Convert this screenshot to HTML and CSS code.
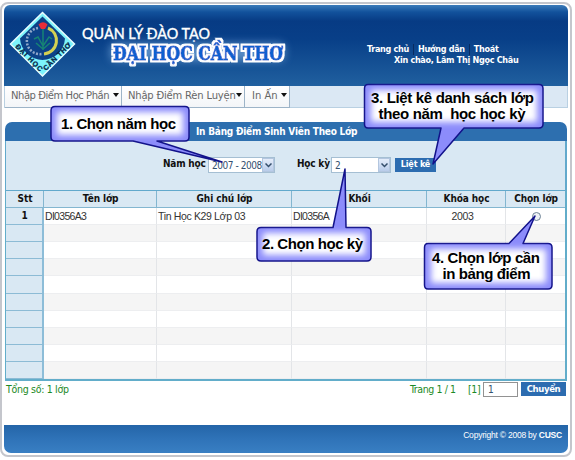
FILE: index.html
```html
<!DOCTYPE html>
<html lang="vi">
<head>
<meta charset="utf-8">
<title>Quản lý đào tạo</title>
<link rel="stylesheet" href="styles.css">
</head>
<body>
<div class="frame">
  <header class="header">
    <svg class="brand" width="310" height="81" viewBox="4 5 310 81">
      <defs>
        <filter id="halo" x="-20%" y="-60%" width="140%" height="220%"><feGaussianBlur stdDeviation="4"/></filter>
        <filter id="outline" x="-5%" y="-30%" width="110%" height="160%">
          <feMorphology in="SourceAlpha" operator="dilate" radius="2" result="fat"/>
          <feGaussianBlur in="fat" stdDeviation=".4" result="edge"/>
          <feFlood flood-color="#fff"/>
          <feComposite in2="edge" operator="in" result="white"/>
          <feMerge><feMergeNode in="white"/><feMergeNode in="SourceGraphic"/></feMerge>
        </filter>
        <path id="left-edge" d="M15 47 L41 73"/>
        <path id="right-edge" d="M46 71 L73 44"/>
      </defs>
      <path d="M42.500 12.500 L74.500 44 L42.500 76 L10.500 44Z" fill="#7df4fb" stroke="#e8fdff" stroke-width="1.500"/>
      <path d="M42.500 16.500 L65 38.500 A23 23 0 0 1 42.500 60 A23 23 0 0 1 20 38.500Z" fill="#0c4288"/>
      <path d="M38 28 A13 13 0 0 0 42 54" fill="none" stroke="#91a8ca" stroke-width="2.500" stroke-dasharray="2 1.500"/>
      <path d="M48 28 A13.500 13.500 0 0 1 44 54" fill="none" stroke="#d3d052" stroke-width="3"/>
      <path d="M43 29V50M34 39L38 37L43 46L49 37L52 39M36 43L43 49L50 43" fill="none" stroke="#168474" stroke-width="1.500"/>
      <path d="M38.500 24.500Q43 20 47.500 24.500L45 29H41Z" fill="#e82d38"/>
      <text class="seal"><textPath href="#left-edge" textLength="35">ĐẠI HỌC</textPath></text>
      <text class="seal"><textPath href="#right-edge" textLength="36">CẦN THƠ</textPath></text>
      <text class="brand-top" x="82" y="39" textLength="128" lengthAdjust="spacingAndGlyphs">QUẢN LÝ ĐÀO TẠO</text>
      <rect x="110" y="43" width="175" height="18" rx="6" fill="#6fa2d8" opacity=".75" filter="url(#halo)"/>
      <text class="brand-main" x="113" y="60" textLength="170" lengthAdjust="spacingAndGlyphs" filter="url(#outline)">ĐẠI HỌC CẦN THƠ</text>
    </svg>
    <div class="account">
      <div class="links"><span>Trang chủ</span><i></i><span>Hướng dẫn</span><i></i><span>Thoát</span></div>
      <div class="hello">Xin chào, Lâm Thị Ngọc Châu</div>
    </div>
  </header>

  <nav class="menu">
    <div class="item item-a">Nhập Điểm Học Phần<b></b></div>
    <div class="item item-b">Nhập Điểm Rèn Luyện<b></b></div>
    <div class="item item-c">In Ấn<b></b></div>
  </nav>

  <main class="panel">
    <h1>In Bảng Điểm Sinh Viên Theo Lớp</h1>
    <div class="filters">
      <label class="label-year">Năm học</label>
      <div class="select year"><span>2007 - 2008</span><em><svg width="7" height="5"><path d="M.5 .5L3.500 3.500L6.500 .5"/></svg></em></div>
      <label class="label-term">Học kỳ</label>
      <div class="select term"><span>2</span><em><svg width="7" height="5"><path d="M.5 .5L3.500 3.500L6.500 .5"/></svg></em></div>
      <div class="button list">Liệt kê</div>
    </div>
    <div class="grid">
      <div class="row head"><div>Stt</div><div>Tên lớp</div><div>Ghi chú lớp</div><div>Khối</div><div>Khóa học</div><div>Chọn lớp</div></div>
      <div class="row"><div>1</div><div class="code">DI0356A3</div><div>Tin Học K29 Lớp 03</div><div class="code">DI0356A</div><div class="mid">2003</div><div class="mid"><span class="radio"></span></div></div>
      <div class="row"><div></div><div></div><div></div><div></div><div></div><div></div></div>
      <div class="row"><div></div><div></div><div></div><div></div><div></div><div></div></div>
      <div class="row"><div></div><div></div><div></div><div></div><div></div><div></div></div>
      <div class="row"><div></div><div></div><div></div><div></div><div></div><div></div></div>
      <div class="row"><div></div><div></div><div></div><div></div><div></div><div></div></div>
      <div class="row"><div></div><div></div><div></div><div></div><div></div><div></div></div>
      <div class="row"><div></div><div></div><div></div><div></div><div></div><div></div></div>
      <div class="row"><div></div><div></div><div></div><div></div><div></div><div></div></div>
      <div class="row"><div></div><div></div><div></div><div></div><div></div><div></div></div>
    </div>
  </main>

  <div class="pager">
    <span class="total">Tổng số: 1 lớp</span>
    <span class="pages">Trang 1 / 1</span>
    <span class="current">[1]</span>
    <span class="page-input">1</span>
    <span class="button go">Chuyển</span>
  </div>
  <footer class="footer">Copyright © 2008 by&nbsp;<b>CUSC</b></footer>
</div>

<svg class="callouts" width="575" height="460" viewBox="0 0 575 460">
  <defs>
    <filter id="soft" x="-20%" y="-40%" width="140%" height="180%"><feGaussianBlur stdDeviation="3"/></filter>
  </defs>
  <g>
    <path class="bubble" d="M55 106.500H185Q189 106.500 189 110.500V137Q189 141 185 141H157L222 162L133 141H55Q51 141 51 137V110.500Q51 106.500 55 106.500Z"/>
    <rect class="glow" x="57" y="112" width="126" height="23"/>
    <text x="61" y="128.500" textLength="115">1. Chọn năm học</text>
  </g>
  <g>
    <path class="bubble" d="M368 84.500H539Q543 84.500 543 88.500V124Q543 128 539 128H464L433 164L441 128H368Q364.500 128 364.500 124V88.500Q364.500 84.500 368 84.500Z"/>
    <rect class="glow" x="371" y="90" width="166" height="32"/>
    <text x="371" y="102.500" textLength="163">3. Liệt kê danh sách lớp</text>
    <text x="378.500" y="118.500" textLength="147" xml:space="preserve">theo năm  học học kỳ</text>
  </g>
  <g>
    <path class="bubble" d="M261 227.500H333L345 169L346 227.500H367Q371 227.500 371 231.500V257Q371 261 367 261H261Q257 261 257 257V231.500Q257 227.500 261 227.500Z"/>
    <rect class="glow" x="263" y="233" width="102" height="22"/>
    <text x="262" y="248.500" textLength="101">2. Chọn học kỳ</text>
  </g>
  <g>
    <path class="bubble" d="M428 243.500H509L535 216L523 243.500H548Q552 243.500 552 247.500V285Q552 289 548 289H428Q424.500 289 424.500 285V247.500Q424.500 243.500 428 243.500Z"/>
    <rect class="glow" x="431" y="249" width="115" height="34"/>
    <text x="432" y="262.500" textLength="108">4. Chọn lớp cần</text>
    <text x="442.500" y="278.500" textLength="88">in bảng điểm</text>
  </g>
</svg>
</body>
</html>
```
FILE: styles.css
```css
* { box-sizing: border-box; }
body { margin: 0; background: #fff; width: 575px; height: 460px; overflow: hidden; position: relative; font-family: "DejaVu Sans Condensed", "DejaVu Sans", sans-serif; font-size: 10px; color: #111; }
.frame { width: 572px; height: 455px; margin: 2px 0 0 0; border: 2px solid #c4c6cc; border-radius: 8px; padding: 1px 2px 2px; display: flex; flex-direction: column; background: #fff; white-space: nowrap; }
.header { height: 81px; flex: none; display: flex; border-radius: 6px 6px 0 0; background: linear-gradient(#3c7cba 0, #12529c 7px, #073b84 16px, #083f88 34px, #20609f 81px); }
.brand { flex: none; overflow: visible; }
.seal { font: bold 7px "Liberation Sans", sans-serif; fill: #062448; stroke: #062448; stroke-width: .3px; }
.brand-top { font: 15px Lato, sans-serif; font-weight: 500; fill: #fff; stroke: #fff; stroke-width: .3px; }
.brand-main { font: bold 19px "DejaVu Serif", serif; fill: #0b60d0; stroke: #0b60d0; stroke-width: .9px; }
.account { color: #fff; font-weight: bold; font-size: 9px; line-height: 11px; padding: 39px 0 0 53px; }
.links { display: flex; letter-spacing: -.3px; }
.links i { width: 1px; height: 11px; background: #082b60; margin: 0 4px 0 4px; }
.hello { padding-left: 27px; letter-spacing: -.3px; }
.menu { height: 22px; flex: none; display: flex; background: #dbe8f4; border: 1px solid #b9d0e2; border-top: 0; }
.item { border: 1px solid #9db4c8; border-left: 0; border-top: 0; color: #666; font-family: "DejaVu Sans", sans-serif; font-size: 10px; line-height: 20px; padding-left: 6px; position: relative; height: 22px; background: linear-gradient(#fff, #f3f5f8); }
.item b { position: absolute; right: 2px; top: 7px; border: 3px solid transparent; border-top: 4px solid #111; border-bottom: 0; }
.item-a { width: 117px; letter-spacing: -.45px; }
.item-b { width: 123px; letter-spacing: -.2px; }
.item-c { width: 45px; padding-left: 7px; }
.panel { margin: 14px 1px 0; flex: none; }
h1 { margin: 0; height: 19px; background: #2d6faf; border-radius: 7px 7px 0 0; color: #fff; font-size: 10px; line-height: 20px; padding-left: 191px; letter-spacing: -.23px; }
.filters { height: 49px; display: flex; padding: 16px 0 0 157px; background: #d9e8f3; border: solid #62a9cc; border-width: 0 2px 0 1px; }
.filters label { font-weight: bold; line-height: 13px; letter-spacing: -.2px; }
.label-year { width: 45px; }
.label-term { width: 34px; margin-left: 22px; }
.select { height: 16px; border: 1px solid #a5bfd3; background: #fff; display: flex; color: #34506f; line-height: 15px; padding-left: 3px; font-size: 10px; justify-content: space-between; }
.select em { width: 12px; height: 14px; background: linear-gradient(#e5edfa, #b9ccea); border: 1px solid #b3c6df; display: grid; place-items: center; }
.select path { fill: none; stroke: #354e6b; stroke-width: 1.500; }
.year { width: 67px; letter-spacing: -.45px; }
.term { width: 60px; }
.button { background: #2c6cb0; color: #fff; font-weight: bold; text-align: center; }
.list { width: 41px; height: 14px; line-height: 13px; margin: 1px 0 0 4px; font-size: 9px; letter-spacing: -.2px; }
.grid { height: 191px; border: 2px solid #62adca; border-left-width: 1px; border-top: 1px solid #62a9cc; display: grid; grid-template-rows: repeat(11, 1fr); }
.row { display: grid; grid-template-columns: 38px 113px 135px 135px 79px 1fr; min-height: 0; background: #fff; }
.row:nth-child(odd) { background: #f5f5f5; }
.row > div { border-right: 1px solid #e3e5e8; border-bottom: 1px solid #edeef0; padding-left: 1px; line-height: 16px; min-height: 0; overflow: hidden; font-family: "Liberation Sans", Arial, sans-serif; font-size: 10.500px; letter-spacing: -.35px; color: #333; }
.row > .code { letter-spacing: -.7px; }
.row > div:last-child { border-right: 0; }
.row > div:first-child { background: #d9e8f3; border-right: 2px solid #8dbdd8; border-bottom-color: #8cbbd5; text-align: center; font: bold 10px/16px "DejaVu Sans Condensed", sans-serif; color: #111; }
.row.head > div { background: #d9e8f3; border-right: 1px solid #83b6d0; border-bottom: 1px solid #83b6d0; text-align: center; font: bold 10px/16px "DejaVu Sans Condensed", sans-serif; letter-spacing: -.1px; color: #111; }
.row.head > div:last-child { border-right: 0; }
.row .mid { text-align: center; padding-right: 8px; }
.row .mid:last-child { padding-right: 0; }
.radio { display: inline-block; width: 9px; height: 9px; border: 1px solid #6e8396; border-radius: 50%; background: #eef2f5; vertical-align: -1px; }
.pager { display: flex; flex: none; height: 44px; color: #1c8a25; padding: 1px 2px 0 2px; line-height: 15px; font-size: 10.500px; }
.total { flex: 1; letter-spacing: -.3px; }
.pages { width: 58px; letter-spacing: -.4px; }
.current { width: 15px; letter-spacing: -.4px; }
.page-input { width: 35px; height: 15px; border: 1px solid #929292; color: #34506f; padding-left: 4px; line-height: 13px; font-size: 10px; }
.go { height: 14px; width: 45px; margin-left: 3px; line-height: 13px; font-size: 9.5px; letter-spacing: -.4px; }
.footer { flex: none; height: 28px; background: linear-gradient(#2465a8, #2f73b8 50%, #397fc3); border-radius: 0 0 7px 7px; color: #fff; display: flex; justify-content: flex-end; padding-right: 6px; font: 8.500px/21px "Liberation Sans", Arial, sans-serif; letter-spacing: -.22px; }
.callouts { position: absolute; left: 0; top: 0; }
.bubble { fill: #8c8cfb; stroke: #12128a; stroke-width: 1.500; stroke-linejoin: round; }
.glow { fill: #fff; filter: url(#soft); }
.callouts text { font: bold 15px "Liberation Sans", Arial, sans-serif; fill: #000; }
```
